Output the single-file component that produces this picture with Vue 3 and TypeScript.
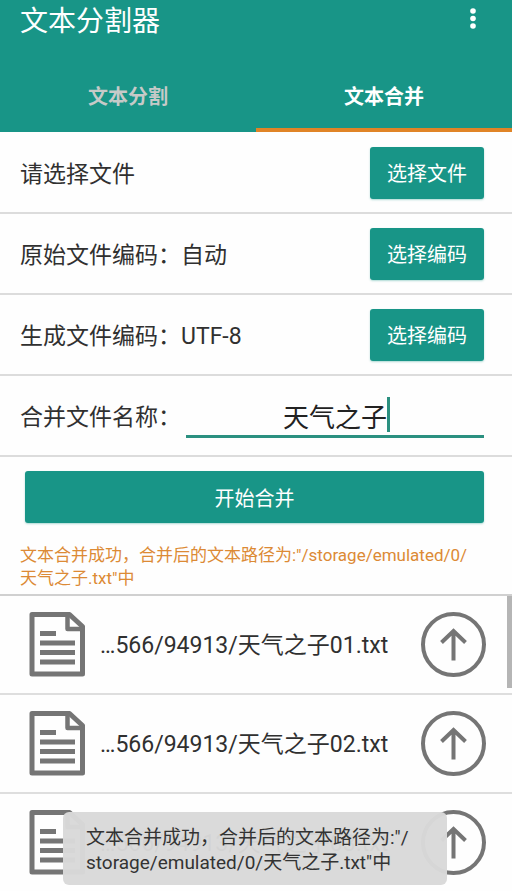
<script setup lang="ts">
import { computed, ref } from 'vue'

type Tab = 'split' | 'merge'

interface FileEntry {
  id: number
  label: string
}

const activeTab = ref<Tab>('merge')
const tabs: { key: Tab; label: string }[] = [
  { key: 'split', label: '文本分割' },
  { key: 'merge', label: '文本合并' },
]

const options = [
  { text: '请选择文件', action: '选择文件' },
  { text: '原始文件编码：自动', action: '选择编码' },
  { text: '生成文件编码：UTF-8', action: '选择编码' },
]

const fileName = ref('天气之子')

// Split at the root slash, where the path is allowed to wrap.
const messageHead = '文本合并成功，合并后的文本路径为:"/'
const messageTail = computed(() => `storage/emulated/0/${fileName.value}.txt"中`)

// The name is centred, so the caret sits half its length to the right of the middle.
const caretStyle = computed(() => ({ left: `calc(50% + ${fileName.value.length / 2}em)` }))

const files: FileEntry[] = [
  { id: 1, label: '…566/94913/天气之子01.txt' },
  { id: 2, label: '…566/94913/天气之子02.txt' },
  { id: 3, label: '…566/94913/天气之子03.txt' },
]
</script>

<template>
  <div class="page">
    <header class="header">
      <div class="bar">
        <h1 class="title">文本分割器</h1>
        <button class="more" type="button" aria-haspopup="menu">
          <svg width="6" height="28" viewBox="0 0 6 28" fill="#fff">
            <circle cx="3" cy="3" r="2.8" />
            <circle cx="3" cy="10.5" r="2.8" />
            <circle cx="3" cy="18" r="2.8" />
          </svg>
        </button>
      </div>
      <nav class="tabs">
        <button
          v-for="tab in tabs"
          :key="tab.key"
          type="button"
          class="tab"
          :class="{ active: activeTab === tab.key }"
          @click="activeTab = tab.key"
        >
          {{ tab.label }}
        </button>
      </nav>
    </header>

    <main class="form">
      <section v-for="option in options" :key="option.text" class="row">
        <span class="row-text">{{ option.text }}</span>
        <button type="button" class="btn">{{ option.action }}</button>
      </section>

      <section class="row">
        <label class="row-text" for="merged-name">合并文件名称：</label>
        <div class="field">
          <input id="merged-name" v-model="fileName" class="input" type="text" />
          <span class="caret" :style="caretStyle"></span>
        </div>
      </section>

      <section class="run">
        <button type="button" class="btn wide">开始合并</button>
        <p class="result">{{ messageHead }}{{ messageTail }}</p>
      </section>
    </main>

    <div class="list-area">
      <ul class="list">
        <li v-for="file in files" :key="file.id" class="item">
          <svg class="doc" width="56" height="65" viewBox="0 0 56 65" fill="none" stroke="#757575" stroke-width="5" stroke-linejoin="round">
            <path d="M3 2.5H40.500L53.500 14.500V62H3Z" />
            <path d="M38.5 3V17H53" stroke-width="4.5" />
            <path d="M11 21.5H27M11 31H46M11 40.5H46M11 50H46" />
          </svg>
          <span class="item-name">{{ file.label }}</span>
          <button type="button" class="up">
            <svg width="65" height="65" viewBox="0 0 65 65" fill="none" stroke="#757575" stroke-width="4">
              <circle cx="32.5" cy="32.5" r="30.5" />
              <path d="M32.5 48.5V20M20.5 30.5L32.5 19L44.5 30.5" />
            </svg>
          </button>
        </li>
      </ul>
      <div class="thumb"></div>
    </div>

    <div class="toast" role="status">{{ messageHead }}<wbr />{{ messageTail }}</div>
  </div>
</template>

<style>
body {
  margin: 0;
  background: #fff;
}
</style>

<style scoped>
.page {
  position: relative;
  display: flex;
  flex-direction: column;
  height: 100vh;
  overflow: hidden;
  background: #fefefe;
  color: #303030;
  font-family: Roboto, 'Noto Sans CJK SC', sans-serif;
}

button {
  margin: 0;
  padding: 0;
  border: 0;
  background: none;
  font-family: inherit;
  cursor: pointer;
}

svg {
  display: block;
}

.header {
  flex: none;
  background: #189587;
}

.bar {
  display: flex;
  align-items: center;
  justify-content: space-between;
  height: 44px;
  padding: 0 36px 18px 20px;
}

.title {
  margin: 0;
  color: #fff;
  font-size: 28px;
  font-weight: 400;
  line-height: 40px;
}

.tabs {
  display: flex;
}

.tab {
  flex: 1;
  height: 70px;
  padding-bottom: 3px;
  border-top: 4px solid transparent;
  border-bottom: 4px solid transparent;
  color: #c6cac8;
  font-size: 20px;
  font-weight: 700;
}

.tab.active {
  border-bottom-color: #e08427;
  color: #fff;
}

.form {
  flex: none;
  padding-top: 1px;
}

.row {
  display: flex;
  align-items: center;
  justify-content: space-between;
  height: 79px;
  padding: 0 28px 0 20px;
  border-bottom: 2px solid #dcdcdc;
}

.row-text {
  padding-top: 4px;
  font-size: 23px;
  line-height: 32px;
  white-space: nowrap;
}

.btn {
  width: 114px;
  height: 52px;
  border-radius: 3px;
  background: #189587;
  box-shadow: 0 1px 2px rgba(24, 149, 135, 0.35);
  color: #fff;
  font-size: 20px;
}

.field {
  position: relative;
  flex: 1;
  margin-top: 2px;
  margin-left: 5px;
  font-size: 26px;
}

.input {
  display: block;
  box-sizing: border-box;
  width: 100%;
  height: 43px;
  padding: 0;
  border: 0;
  border-bottom: 3px solid #2b9080;
  outline: 0;
  background: transparent;
  color: #222;
  caret-color: transparent;
  font-family: inherit;
  font-size: inherit;
  text-align: center;
}

.caret {
  position: absolute;
  top: 2px;
  width: 3px;
  height: 35px;
  background: #2b9080;
}

.run {
  padding: 14px 28px 4px 20px;
  border-bottom: 2px solid #d0d0d0;
}

.btn.wide {
  display: block;
  width: calc(100% - 5px);
  margin-left: 5px;
}

.result {
  margin: 21px 0 0;
  color: #dc8a35;
  font-size: 17px;
  line-height: 23px;
  overflow-wrap: anywhere;
}

.list-area {
  position: relative;
  flex: 1;
  min-height: 0;
  overflow: hidden;
}

.list {
  margin: 0;
  padding: 0;
  list-style: none;
}

.item {
  display: flex;
  align-items: center;
  height: 97px;
  padding: 0 26px 0 29px;
  border-bottom: 2px solid #dedede;
}

.doc {
  flex: none;
}

.item-name {
  flex: 1;
  padding-top: 2px;
  margin-left: 15px;
  font-size: 23px;
  line-height: 32px;
  white-space: nowrap;
}

.up {
  flex: none;
}

.thumb {
  position: absolute;
  top: 0;
  right: 0;
  width: 5px;
  height: 92px;
  background: #b5b5b5;
}

.toast {
  position: absolute;
  right: 65px;
  bottom: 6px;
  left: 63px;
  padding: 13px 22px 10px 23px;
  border-radius: 6px;
  background: rgba(217, 217, 217, 0.97);
  color: #333;
  font-size: 19px;
  line-height: 25px;
}
</style>
